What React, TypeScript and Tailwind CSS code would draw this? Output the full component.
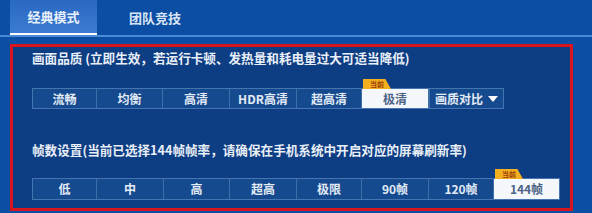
const quality = [
  { label: "流畅", w: "w-[64px]" },
  { label: "均衡", w: "w-[66px]" },
  { label: "高清", w: "w-[67px]" },
  { label: "HDR高清", w: "w-[67px]" },
  { label: "超高清", w: "w-[65px]" },
  { label: "极清", w: "w-[67px]", active: true },
];

const fps = [
  { label: "低", w: "w-[64px]" },
  { label: "中", w: "w-[67px]" },
  { label: "高", w: "w-[66px]" },
  { label: "超高", w: "w-[67px]" },
  { label: "极限", w: "w-[65px]" },
  { label: "90帧", w: "w-[67px]" },
  { label: "120帧", w: "w-[65px]" },
  { label: "144帧", w: "w-[65px]", active: true },
];

function Cell({ label, w, active }: { label: string; w: string; active?: boolean }) {
  return (
    <div
      className={`relative ${w} h-full flex items-center justify-center border-r border-[#3f6ea9] last:border-r-0 ${
        active ? "bg-[#f4f7fb] text-[#4d6486]" : "bg-[#154a8e] text-[#e3ebf6]"
      }`}
    >
      {active && (
        <span className="absolute left-[1px] top-[-10px] h-[10px] w-[28px] bg-[#f2b01e] text-[7px] leading-[10px] text-[#9a3b0c] pl-[7px] [clip-path:polygon(0_0,80%_0,100%_100%,0_100%)]">
          当前
        </span>
      )}
      {label}
    </div>
  );
}

function App() {
  return (
    <div className="w-[592px] h-[213px] overflow-hidden bg-[#0c4ea4] font-['Noto_Sans_CJK_SC','Noto_Sans',sans-serif] font-bold">
      {/* Tabs */}
      <div className="flex h-[35px] pl-[10px]">
        <div className="w-[87px] h-full flex items-center justify-center bg-gradient-to-b from-[#2a69c2] to-[#3b7bd0] border-b-2 border-white text-[13px] text-[#e8f0fb]">
          经典模式
        </div>
        <div className="w-[116px] h-full flex items-center justify-center text-[13px] text-[#d9e5f6]">
          团队竞技
        </div>
      </div>
      <div className="h-[2px] bg-[#4a8ad8]" />

      {/* Settings panel */}
      <div className="ml-[10px] mt-[7px] w-[563px] h-[167px] border-[3px] border-[#d8141f] bg-[#0d3d82] pl-[19px]">
        <p className="mt-[3px] text-[12.6px] leading-[16px] text-[#e9eff8]">
          画面品质 (立即生效，若运行卡顿、发热量和耗电量过大可适当降低)
        </p>
        <div className="mt-[22px] flex h-[21px] w-fit border border-[#4674b0] text-[12px]">
          {quality.map((q) => (
            <Cell key={q.label} {...q} />
          ))}
          <div className="w-[74px] h-full flex items-center justify-center gap-[5px] bg-[#154a8e] text-[#e3ebf6] border-l border-[#3f6ea9]">
            画质对比
            <svg width="10" height="6" viewBox="0 0 10 6">
              <path d="M0 0H10L5 6Z" fill="#ffffff" />
            </svg>
          </div>
        </div>

        <p className="mt-[33px] text-[12.6px] leading-[16px] text-[#e9eff8]">
          帧数设置(当前已选择144帧帧率，请确保在手机系统中开启对应的屏幕刷新率)
        </p>
        <div className="mt-[20px] flex h-[22px] w-fit border border-[#4674b0] text-[12px]">
          {fps.map((f) => (
            <Cell key={f.label} {...f} />
          ))}
        </div>
      </div>
    </div>
  );
}

export default App;
